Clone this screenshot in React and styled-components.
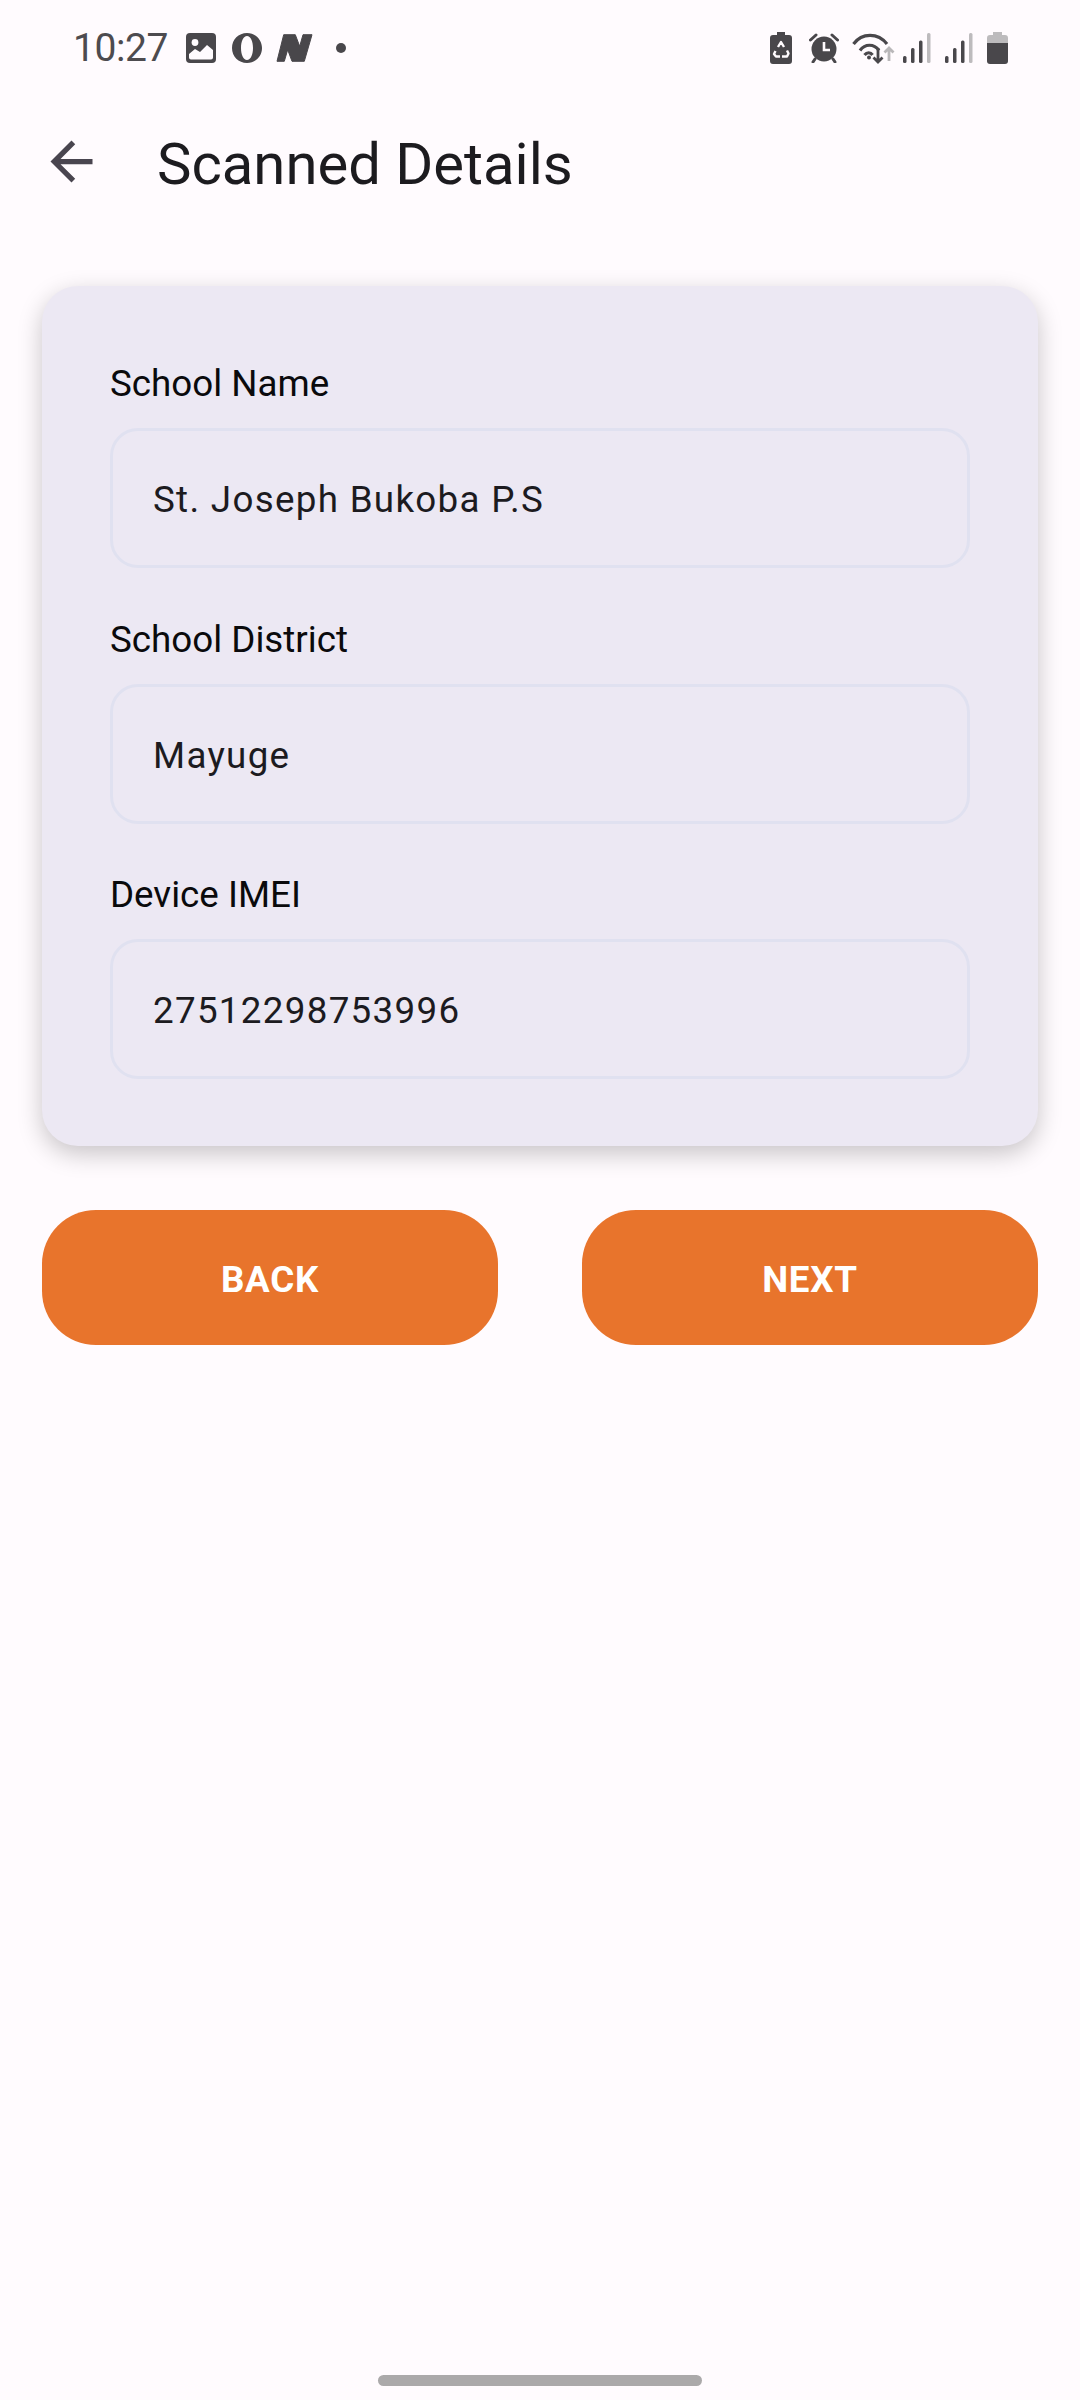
import React from 'react';
import styled, { createGlobalStyle } from 'styled-components';

const GlobalStyle = createGlobalStyle`
  html, body {
    margin: 0;
    padding: 0;
    background: #fffbfe;
  }
`;

const Screen = styled.div`
  box-sizing: border-box;
  display: flex;
  flex-direction: column;
  width: 1080px;
  height: 2400px;
  background: #fffbfe;
  font-family: Roboto, "Liberation Sans", sans-serif;
  overflow: hidden;
`;

const StatusBar = styled.div`
  display: flex;
  align-items: center;
  justify-content: space-between;
  box-sizing: border-box;
  height: 48px;
  margin-top: 24px;
  padding: 0 72px 0 73px;
  color: #49474b;
`;

const StatusGroup = styled.div`
  display: flex;
  align-items: center;
`;

const Slot = styled.span`
  display: flex;
  margin-left: ${p => p.$ml || 0}px;
`;

const Clock = styled.span`
  width: 95px;
  font-size: 39px;
  letter-spacing: -0.4px;
  line-height: 48px;
  color: #4d4b4f;
`;

const TopBar = styled.div`
  display: flex;
  align-items: center;
  height: 90px;
  margin-top: 47px;
  padding-left: 40px;
`;

const BackIcon = styled.svg`
  flex: none;
  width: 63px;
  height: 63px;
  margin-right: 54px;
  margin-bottom: 6px;
  color: #49454f;
`;

const Title = styled.h1`
  margin: 0;
  font-size: 58px;
  font-weight: 400;
  color: #1c1b1f;
`;

const Content = styled.div`
  display: flex;
  flex-direction: column;
  gap: 64px;
  padding: 0 42px;
  margin-top: 77px;
`;

const Card = styled.div`
  display: flex;
  flex-direction: column;
  gap: 47.500px;
  padding: 74px 68px 67px;
  border-radius: 36px;
  background: #ece8f3;
  box-shadow: 0 8px 24px rgba(0, 0, 0, 0.22);
`;

const Field = styled.div`
  display: flex;
  flex-direction: column;
  gap: 20px;
`;

const Label = styled.div`
  font-size: 36.750px;
  line-height: 48px;
  color: #0a0a0c;
`;

const Input = styled.div`
  box-sizing: border-box;
  display: flex;
  align-items: center;
  height: 140px;
  padding: 3px 40px 0;
  border: 3px solid #e0e1f0;
  border-radius: 28px;
  font-size: 36.750px;
  letter-spacing: 1.300px;
  color: #1c1b1f;
`;

const ButtonRow = styled.div`
  display: flex;
  justify-content: space-between;
`;

const Button = styled.button`
  width: 456px;
  height: 135px;
  padding: 3px 0 0;
  border: 0;
  border-radius: 54px;
  background: #e8742c;
  color: #fff;
  font-family: inherit;
  font-size: 36.750px;
  font-weight: 700;
  letter-spacing: 0.7px;
`;

const HomeBar = styled.div`
  width: 324px;
  height: 11px;
  margin: auto auto 14px;
  border-radius: 6px;
  background: #aba9aa;
`;

const ImageIcon = () => (
  <svg width="30" height="30" viewBox="0 0 30 30">
    <rect width="30" height="30" rx="4" fill="currentColor" />
    <circle cx="9" cy="9.500" r="3.400" fill="#fffbfe" />
    <path d="M3 24.500v-3.500l6-5 5 3 7-7 6 5v7.500a2 2 0 0 1-2 2H5a2 2 0 0 1-2-2z" fill="#fffbfe" />
  </svg>
);

const OperaIcon = () => (
  <svg width="32" height="32" viewBox="0 0 32 32">
    <path fillRule="evenodd" fill="currentColor" d="M16 1c8.500 0 15 6.600 15 15s-6.500 15-15 15S1 24.400 1 16 7.500 1 16 1zm0 3c-3.600 0-6 5.400-6 12s2.400 12 6 12 6-5.400 6-12-2.400-12-6-12z" />
  </svg>
);

const NewsIcon = () => (
  <svg width="38" height="30" viewBox="-1 -1 38 30">
    <path fill="currentColor" stroke="currentColor" strokeLinejoin="round" d="M0 27.300L6.700.7h11.600l4.400 11.600L26 .7h9l-7.700 26.600H15l-4.300-11.600-3.400 11.600z" />
  </svg>
);

const Dot = styled.span`
  width: 10px;
  height: 10px;
  margin-left: 22px;
  border-radius: 50%;
  background: #49474b;
`;

const SaverIcon = () => (
  <svg width="22" height="32" viewBox="0 0 22 32">
    <path fill="currentColor" d="M7 0h8v3h4a3 3 0 0 1 3 3v23a3 3 0 0 1-3 3H3a3 3 0 0 1-3-3V6a3 3 0 0 1 3-3h4z" />
    <path fill="none" stroke="#fffbfe" strokeWidth="2.400" strokeLinejoin="round" d="M8 15l3-5 3 5M5.500 19l-1.500 3 2 2.500h4M12 24.500h5l1.500-3-1.500-3" />
  </svg>
);

const AlarmIcon = () => (
  <svg width="30" height="30" viewBox="0 0 30 30">
    <circle cx="15" cy="16" r="12.500" fill="currentColor" />
    <path stroke="currentColor" strokeWidth="3" strokeLinecap="round" d="M1.500 7L7 2M28.500 7L23 2M6 26l-2 3M24 26l2 3" />
    <path stroke="#fffbfe" strokeWidth="2.600" fill="none" d="M15 9v8h6" />
  </svg>
);

const WifiIcon = () => (
  <svg width="49" height="32" viewBox="0 0 49 32">
    <g fill="none" stroke="currentColor" strokeWidth="3.200">
      <path d="M1.500 12C10 .5 26 .5 35 12" />
      <path d="M8 18.500C13 11.500 22 11.500 27 18.500" />
      <path d="M12.500 23c2.500-3 6-3 8 0" />
    </g>
    <circle cx="17" cy="25.500" r="2" fill="currentColor" />
    <path fill="none" stroke="currentColor" strokeWidth="2.800" d="M26 16v14M21.500 25.500L26 30l4.500-4.500" />
    <path fill="none" stroke="#b9b7b9" strokeWidth="2.800" d="M37 29V16M32.500 20.500L37 16l4.500 4.500" />
  </svg>
);

const SignalIcon = () => (
  <svg width="28" height="30" viewBox="0 0 28 30">
    <rect x="0" y="23" width="3.500" height="7" rx="1.500" fill="currentColor" />
    <rect x="8" y="15" width="3.500" height="15" rx="1.500" fill="currentColor" />
    <rect x="16" y="7.500" width="3.500" height="22.500" rx="1.500" fill="currentColor" />
    <rect x="24" y="0" width="3.500" height="30" rx="1.500" fill="#bdbbbd" />
  </svg>
);

const BatteryIcon = () => (
  <svg width="21" height="32" viewBox="0 0 21 32">
    <path fill="#bdbbbd" d="M6 0h9v3h3a3 3 0 0 1 3 3v5H0V6a3 3 0 0 1 3-3h3z" />
    <path fill="currentColor" d="M0 11h21v18a3 3 0 0 1-3 3H3a3 3 0 0 1-3-3z" />
  </svg>
);

const fields = [
  { label: 'School Name', value: 'St. Joseph Bukoba P.S' },
  { label: 'School District', value: 'Mayuge' },
  { label: 'Device IMEI', value: '27512298753996' },
];

const App = () => (
  <Screen>
    <GlobalStyle />
    <StatusBar>
      <StatusGroup>
        <Clock>10:27</Clock>
        <Slot $ml={18}><ImageIcon /></Slot>
        <Slot $ml={15}><OperaIcon /></Slot>
        <Slot $ml={13}><NewsIcon /></Slot>
        <Dot />
      </StatusGroup>
      <StatusGroup>
        <SaverIcon />
        <Slot $ml={17}><AlarmIcon /></Slot>
        <Slot $ml={13}><WifiIcon /></Slot>
        <Slot $ml={2}><SignalIcon /></Slot>
        <Slot $ml={14}><SignalIcon /></Slot>
        <Slot $ml={14}><BatteryIcon /></Slot>
      </StatusGroup>
    </StatusBar>
    <TopBar>
      <BackIcon viewBox="0 0 24 24" fill="currentColor">
        <path d="M20 11H7.830l5.590-5.590L12 4l-8 8 8 8 1.410-1.410L7.830 13H20v-2z" />
      </BackIcon>
      <Title>Scanned Details</Title>
    </TopBar>
    <Content>
      <Card>
        {fields.map(f => (
          <Field key={f.label}>
            <Label>{f.label}</Label>
            <Input>{f.value}</Input>
          </Field>
        ))}
      </Card>
      <ButtonRow>
        <Button>BACK</Button>
        <Button>NEXT</Button>
      </ButtonRow>
    </Content>
    <HomeBar />
  </Screen>
);

export default App;
